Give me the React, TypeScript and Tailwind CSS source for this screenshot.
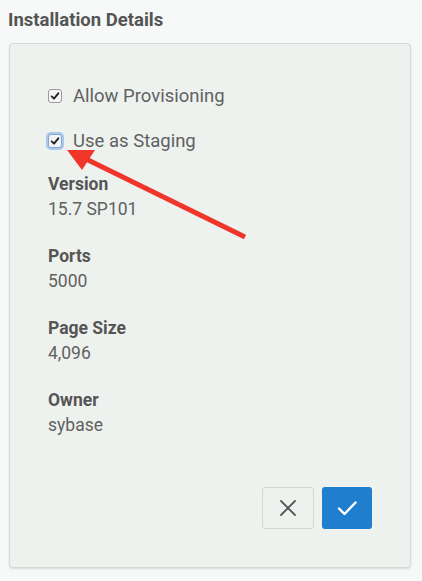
import React from 'react';

const details = [
  { label: 'Version', value: '15.7 SP101' },
  { label: 'Ports', value: '5000' },
  { label: 'Page Size', value: '4,096' },
  { label: 'Owner', value: 'sybase' },
];

function Check({ focused }: { focused?: boolean }) {
  return (
    <span
      className={`flex h-[14px] w-[14px] items-center justify-center rounded-[3px] border bg-[#f4f4f4] ${
        focused ? 'border-[#7fa8d8] ring-2 ring-[#a9c8ec]' : 'border-[#9a9a9a]'
      }`}
    >
      <svg viewBox="0 0 12 12" className="h-[10px] w-[10px]">
        <path d="M2 6.5 L4.8 9.2 L10 2.8" fill="none" stroke="#222" strokeWidth="2.2" strokeLinecap="round" strokeLinejoin="round" />
      </svg>
    </span>
  );
}

function App() {
  return (
    <div className="relative h-[581px] w-[422px] bg-[#f6f9f7] font-['Roboto',sans-serif]">
      <div className="px-2 pt-[9px]">
        <h2 className="text-[18.5px] font-bold leading-[22px] text-[#545454]">Installation Details</h2>
      </div>

      <div className="mx-[9px] mt-[12px] h-[525px] w-[402px] rounded-[4px] border border-[#d6d9d7] bg-[#eef2ef] shadow-[0_1px_2px_rgba(0,0,0,0.12)]">
        <div className="flex flex-col px-[38px] pt-[40px]">
          <label className="flex items-center gap-[11px] text-[18.5px] leading-[24px] text-[#616161]">
            <Check />
            Allow Provisioning
          </label>
          <label className="mt-[21px] flex items-center gap-[11px] text-[18.5px] leading-[24px] text-[#616161]">
            <Check focused />
            Use as Staging
          </label>

          <div className="mt-[20px] flex flex-col gap-[25px]">
            {details.map((d) => (
              <div key={d.label} className="flex flex-col">
                <span className="text-[17.5px] font-bold leading-[22px] text-[#555]">{d.label}</span>
                <span className="mt-[3px] text-[17.5px] leading-[22px] text-[#616161]">{d.value}</span>
              </div>
            ))}
          </div>

          <div className="mt-[51px] flex justify-end gap-[8px]">
            <button className="flex h-[42px] w-[52px] items-center justify-center rounded-[3px] border border-[#d4d7d5] bg-[#eef2ef]">
              <svg viewBox="0 0 20 20" className="h-[20px] w-[20px]">
                <path d="M3 3 L17 17 M17 3 L3 17" stroke="#555" strokeWidth="1.8" strokeLinecap="round" />
              </svg>
            </button>
            <button className="flex h-[42px] w-[50px] items-center justify-center rounded-[3px] bg-[#1f7ecd]">
              <svg viewBox="0 0 22 22" className="h-[22px] w-[22px]">
                <path d="M3 11.5 L8.5 17 L19.5 5.5" fill="none" stroke="#fff" strokeWidth="2.4" strokeLinecap="round" strokeLinejoin="round" />
              </svg>
            </button>
          </div>
        </div>
      </div>

      {/* annotation arrow */}
      <svg className="pointer-events-none absolute left-0 top-0" width="422" height="581">
        <line x1="245" y1="237" x2="86" y2="159" stroke="#f0352b" strokeWidth="5" />
        <polygon points="67,150 95,150 82,170" fill="#f0352b" />
      </svg>
    </div>
  );
}

export default App;
